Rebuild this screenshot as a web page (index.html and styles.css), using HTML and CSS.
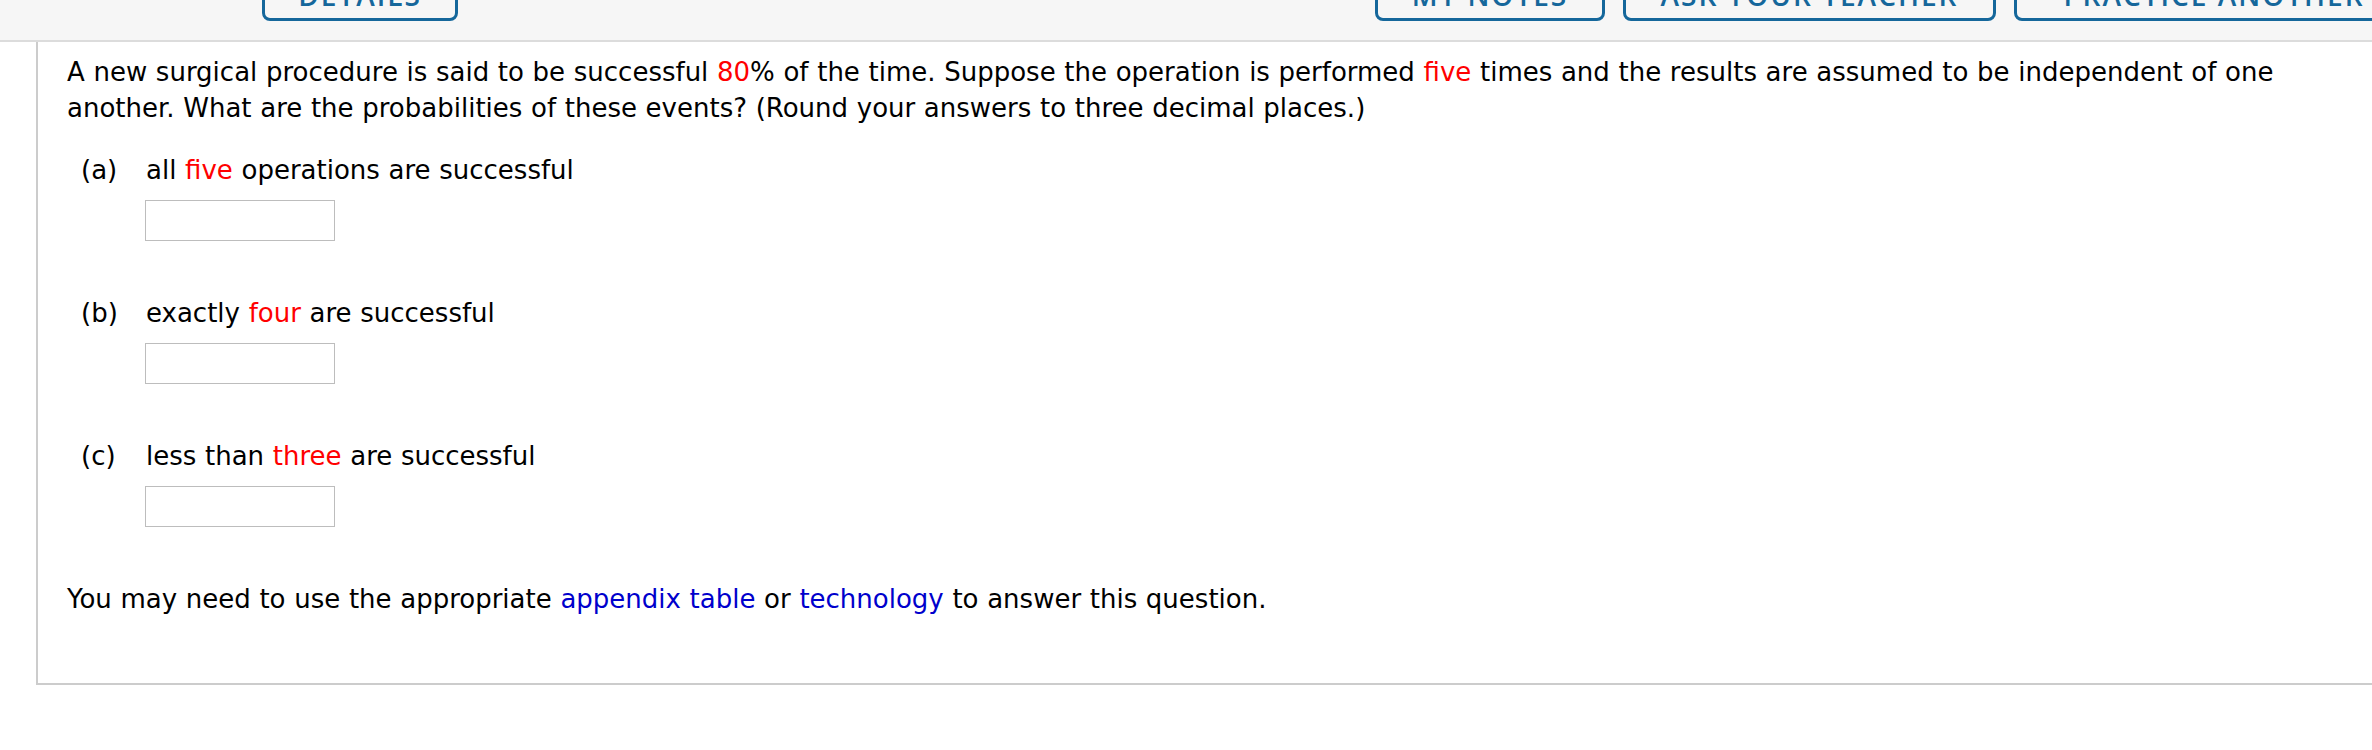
FILE: index.html
```html
<!DOCTYPE html>
<html lang="en">
<head>
<meta charset="utf-8">
<title>Question</title>
<link rel="stylesheet" href="styles.css">
</head>
<body>
<header class="toolbar">
  <button class="tb-btn btn-details" type="button">DETAILS</button>
  <button class="tb-btn btn-notes" type="button">MY NOTES</button>
  <button class="tb-btn btn-ask" type="button">ASK YOUR TEACHER</button>
  <button class="tb-btn btn-practice" type="button">PRACTICE ANOTHER</button>
</header>
<main class="question">
  <p class="stem">A new surgical procedure is said to be successful <span class="rv">80</span>% of the time. Suppose the operation is performed <span class="rv">five</span> times and the results are assumed to be independent of one another. What are the probabilities of these events? (Round your answers to three decimal places.)</p>
  <ol class="parts">
    <li class="part">
      <div class="part-q"><span class="part-label">(a)</span><span>all <span class="rv">five</span> operations are successful</span></div>
      <input class="answer" type="text">
    </li>
    <li class="part">
      <div class="part-q"><span class="part-label">(b)</span><span>exactly <span class="rv">four</span> are successful</span></div>
      <input class="answer" type="text">
    </li>
    <li class="part">
      <div class="part-q"><span class="part-label">(c)</span><span>less than <span class="rv">three</span> are successful</span></div>
      <input class="answer" type="text">
    </li>
  </ol>
  <p class="note">You may need to use the appropriate <a class="link" href="#">appendix table</a> or <a class="link" href="#">technology</a> to answer this question.</p>
</main>
</body>
</html>
```

FILE: styles.css
```css
html, body {
  margin: 0;
  padding: 0;
  overflow: hidden;
  background: #ffffff;
}

body {
  font-family: Verdana, "DejaVu Sans", sans-serif;
  font-size: 26px;
  line-height: 36px;
  word-spacing: 0.4px;
  color: #000000;
}

.toolbar {
  display: flex;
  align-items: flex-end;
  margin-top: -39px;
  padding: 0 0 19px 262px;
  background: #f6f6f6;
  border-bottom: 2px solid #dcdcdc;
  gap: 18px;
}

.tb-btn {
  flex-shrink: 0;
  box-sizing: border-box;
  height: 60px;
  display: flex;
  align-items: flex-end;
  justify-content: center;
  padding: 0 0 8px 0;
  margin: 0;
  background: transparent;
  border: 3px solid #15679b;
  border-radius: 8px;
  color: #15679b;
  font-family: "Open Sans", "DejaVu Sans", sans-serif;
  font-weight: 600;
  font-size: 28px;
  line-height: 30px;
  letter-spacing: 2px;
  word-spacing: 0;
}

.btn-details { width: 196px; margin-right: 899px; }
.btn-notes { width: 230px; }
.btn-ask { width: 373px; }
.btn-practice { width: 400px; }

.question {
  margin: 0 -40px 0 36px;
  padding: 12px 82px 66px 29px;
  border-left: 2px solid #cccccc;
  border-bottom: 2px solid #cccccc;
}

.stem {
  margin: 0;
}

.rv {
  color: #ff0000;
}

.link {
  color: #0000cc;
  text-decoration: none;
}

.parts {
  list-style: none;
  margin: 26px 0 0 0;
  padding: 0;
  display: flex;
  flex-direction: column;
  gap: 54px;
}

.part {
  display: flex;
  flex-direction: column;
  align-items: flex-start;
}

.part-q {
  display: flex;
}

.part-label {
  width: 65px;
  margin-left: 14px;
}

.answer {
  box-sizing: border-box;
  width: 190px;
  height: 41px;
  margin: 12px 0 0 78px;
  padding: 0 6px;
  border: 1px solid #bdbdbd;
  border-radius: 0;
  background: #ffffff;
  font: inherit;
  outline: none;
}

.note {
  margin: 54px 0 0 0;
}
```
